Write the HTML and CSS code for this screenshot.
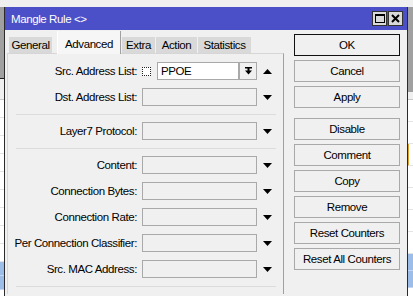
FILE: index.html
```html
<!DOCTYPE html>
<html lang="en">

<head>
    <meta charset="UTF-8">
    <meta name="viewport" content="width=device-width, initial-scale=1.0">
    <title>Mangle Rule</title>
    <link rel="stylesheet" href="styles.css">
</head>

<body>
    <!-- list window behind the dialog -->
    <div class="desk">
        <div class="strip strip-left">
            <div class="s-light"></div>
            <div class="s-gray s-gray-left"></div>
            <div class="s-head"></div>
            <div class="s-row"></div>
            <div class="s-row"></div>
            <div class="s-row"></div>
            <div class="s-row"></div>
            <div class="s-row"></div>
            <div class="s-row"></div>
            <div class="s-row"></div>
            <div class="s-row"></div>
            <div class="s-row"></div>
            <div class="s-sel"></div>
            <div class="s-sel"></div>
            <div class="s-white"></div>
        </div>
        <div class="desk-fill"></div>
        <div class="strip strip-right">
            <div class="s-light"></div>
            <div class="s-gray s-gray-right"></div>
            <div class="s-head s-head-short"></div>
            <div class="s-row s-row-tall"></div>
            <div class="s-row s-row-tall"></div>
            <div class="s-row s-row-tall s-mark"></div>
            <div class="s-row s-row-tall"></div>
            <div class="s-row s-row-tall"></div>
            <div class="s-row s-row-tall"></div>
            <div class="s-row s-row-tall"></div>
            <div class="s-sel s-sel-tall"></div>
            <div class="s-sel s-sel-tall"></div>
            <div class="s-white"></div>
        </div>
    </div>

    <!-- Mangle rule dialog -->
    <div class="window">
        <div class="titlebar">
            <span class="title">Mangle Rule &lt;&gt;</span>
            <span class="ctl">
                <svg width="10" height="9" viewBox="0 0 10 9">
                    <rect x="0.5" y="1" width="9" height="7.5" fill="none" stroke="#000" stroke-width="1" />
                    <rect x="0" y="0" width="10" height="2" fill="#000" />
                </svg>
            </span>
            <span class="ctl">
                <svg width="9" height="9" viewBox="0 0 9 9">
                    <path d="M1 1 L8 8 M8 1 L1 8" stroke="#000" stroke-width="2" />
                </svg>
            </span>
        </div>

        <div class="content">
            <div class="main">
                <div class="tabs">
                    <button class="tab tab-general">General</button>
                    <button class="tab tab-advanced active">Advanced</button>
                    <button class="tab tab-extra">Extra</button>
                    <button class="tab tab-action">Action</button>
                    <button class="tab tab-statistics">Statistics</button>
                </div>

                <div class="panel">
                    <div class="row">
                        <span class="lbl">Src. Address List:</span>
                        <div class="combo">
                            <span class="check"></span>
                            <span class="input">PPOE</span>
                            <span class="drop">
                                <svg width="7" height="8" viewBox="0 0 7 8">
                                    <rect x="0" y="0" width="7" height="1.5" fill="#000" />
                                    <rect x="2.5" y="1" width="2" height="3" fill="#000" />
                                    <polygon points="0,3.5 7,3.5 3.5,7.5" fill="#000" />
                                </svg>
                            </span>
                        </div>
                        <svg class="arrow" width="9" height="5" viewBox="0 0 9 5">
                            <polygon points="0,5 9,5 4.5,0" fill="#000" />
                        </svg>
                    </div>
                    <div class="row">
                        <span class="lbl">Dst. Address List:</span>
                        <span class="field"></span>
                        <svg class="arrow" width="9" height="5" viewBox="0 0 9 5">
                            <polygon points="0,0 9,0 4.5,5" fill="#000" />
                        </svg>
                    </div>

                    <div class="sep"></div>

                    <div class="row">
                        <span class="lbl">Layer7 Protocol:</span>
                        <span class="field"></span>
                        <svg class="arrow" width="9" height="5" viewBox="0 0 9 5">
                            <polygon points="0,0 9,0 4.5,5" fill="#000" />
                        </svg>
                    </div>

                    <div class="sep"></div>

                    <div class="row">
                        <span class="lbl">Content:</span>
                        <span class="field"></span>
                        <svg class="arrow" width="9" height="5" viewBox="0 0 9 5">
                            <polygon points="0,0 9,0 4.5,5" fill="#000" />
                        </svg>
                    </div>
                    <div class="row">
                        <span class="lbl">Connection Bytes:</span>
                        <span class="field"></span>
                        <svg class="arrow" width="9" height="5" viewBox="0 0 9 5">
                            <polygon points="0,0 9,0 4.5,5" fill="#000" />
                        </svg>
                    </div>
                    <div class="row">
                        <span class="lbl">Connection Rate:</span>
                        <span class="field"></span>
                        <svg class="arrow" width="9" height="5" viewBox="0 0 9 5">
                            <polygon points="0,0 9,0 4.5,5" fill="#000" />
                        </svg>
                    </div>
                    <div class="row">
                        <span class="lbl">Per Connection Classifier:</span>
                        <span class="field"></span>
                        <svg class="arrow" width="9" height="5" viewBox="0 0 9 5">
                            <polygon points="0,0 9,0 4.5,5" fill="#000" />
                        </svg>
                    </div>
                    <div class="row">
                        <span class="lbl">Src. MAC Address:</span>
                        <span class="field"></span>
                        <svg class="arrow" width="9" height="5" viewBox="0 0 9 5">
                            <polygon points="0,0 9,0 4.5,5" fill="#000" />
                        </svg>
                    </div>

                    <div class="sep"></div>
                </div>
            </div>

            <!-- command buttons -->
            <div class="buttons">
                <button class="btn btn-default">OK</button>
                <button class="btn">Cancel</button>
                <button class="btn btn-group-end">Apply</button>
                <button class="btn">Disable</button>
                <button class="btn">Comment</button>
                <button class="btn">Copy</button>
                <button class="btn">Remove</button>
                <button class="btn">Reset Counters</button>
                <button class="btn">Reset All Counters</button>
            </div>
        </div>
    </div>
</body>

</html>
```

FILE: styles.css
```css
* {
    box-sizing: border-box;
}

body {
    margin: 0;
    width: 413px;
    height: 296px;
    overflow: hidden;
    position: relative;
    background-color: #f0f0f0;
    font-family: "Liberation Sans", Arial, sans-serif;
    font-size: 11.5px;
    letter-spacing: -0.4px;
    color: #000;
}

/* list window behind the dialog */
.desk {
    display: flex;
    height: 296px;
}

.desk-fill {
    flex: 1;
}

.strip {
    display: flex;
    flex-direction: column;
}

.strip-left {
    width: 4px;
}

.strip-right {
    width: 6px;
}

.s-light {
    height: 7px;
    background-color: #f0f0f0;
}

.s-gray {
    background-color: #a0a0a0;
}

.s-gray-left {
    height: 72px;
    border-bottom: 1px solid #1e1e1e;
}

.s-gray-right {
    height: 85px;
}

.s-head {
    height: 21px;
    background-color: #f0f0f0;
    border-bottom: 1px solid #c8c8c8;
}

.s-head-short {
    height: 8px;
}

.s-row {
    height: 18px;
    background-color: #fff;
    border-bottom: 1px solid #e3e3e3;
}

.s-row-tall {
    height: 22px;
}

.s-mark {
    border-left: 2px solid #e0a030;
}

.s-sel {
    height: 14px;
    background-color: #9dbde9;
    border-bottom: 1px solid #c4d6f1;
}

.s-sel-tall {
    height: 17px;
}

.s-white {
    flex: 1;
    background-color: #fff;
}

/* dialog window */
.window {
    position: absolute;
    left: 4px;
    top: 7px;
    width: 404px;
    height: 289px;
    background-color: #f0f0f0;
    border-left: 1px solid #2a2a2a;
    border-right: 1px solid #2a2a2a;
}

.titlebar {
    display: flex;
    align-items: center;
    height: 23px;
    padding: 0 4px 0 6px;
    background-color: #4b50c8;
    color: #fff;
}

.title {
    flex: 1;
    padding-top: 1px;
}

.ctl {
    display: flex;
    align-items: center;
    justify-content: center;
    width: 15px;
    height: 15px;
    margin-left: 1px;
    background-color: #dadada;
    border: 1px solid #333;
}

.content {
    display: flex;
    padding: 1px 0 0 2px;
}

.main {
    display: flex;
    flex-direction: column;
    width: 277px;
}

/* tabs */
.tabs {
    display: flex;
    align-items: flex-end;
    height: 22px;
    padding-left: 2px;
    position: relative;
    z-index: 1;
}

.tab {
    font: inherit;
    letter-spacing: inherit;
    color: #000;
    height: 16px;
    line-height: 16px;
    padding: 0;
    margin: 0 1px 0 0;
    border: none;
    background-color: #d9d9d9;
    text-align: center;
    white-space: nowrap;
}

.tab-general {
    width: 43px;
    margin-right: 5px;
}

.tab-advanced {
    width: 64px;
}

.tab-extra {
    width: 33px;
}

.tab-action {
    width: 41px;
}

.tab-statistics {
    width: 53px;
}

.tab.active {
    height: 23px;
    margin-bottom: -1px;
    padding-top: 3px;
    line-height: 15px;
    vertical-align: top;
    background-color: #f6f6f6;
    border-left: 1px solid #fff;
    border-right: 1px solid #a0a0a0;
}

.panel {
    flex: 1;
    padding-top: 8px;
    background-color: #f0f0f0;
    border: 1px solid #d6d6d6;
    border-right-color: #a0a0a0;
    border-bottom: none;
}

/* form rows */
.row {
    display: flex;
    align-items: center;
    height: 18px;
    margin-bottom: 8px;
}

.lbl {
    width: 129px;
    margin-right: 5px;
    text-align: right;
    white-space: nowrap;
}

.field {
    width: 115px;
    height: 18px;
    border: 1px solid #a9a9a9;
    background-color: #f0f0f0;
}

.combo {
    display: flex;
    align-items: center;
    width: 115px;
    height: 18px;
}

.check {
    width: 9px;
    height: 9px;
    margin-right: 6px;
    border: 1px dotted #222;
    background-color: #fff;
}

.input {
    width: 82px;
    height: 18px;
    padding-left: 3px;
    line-height: 16px;
    border: 1px solid #a9a9a9;
    background-color: #fff;
}

.drop {
    display: flex;
    align-items: center;
    justify-content: center;
    width: 18px;
    height: 18px;
    border: 1px solid #a9a9a9;
    background-color: #f0f0f0;
}

.arrow {
    margin-left: 6px;
}

.sep {
    height: 1px;
    margin: 2px 7px 7px 8px;
    background-color: #dcdcdc;
}

/* command buttons */
.buttons {
    display: flex;
    flex-direction: column;
    width: 106px;
    margin: 3px 0 0 10px;
}

.btn {
    font: inherit;
    letter-spacing: inherit;
    color: #000;
    height: 22px;
    padding: 0;
    margin-bottom: 4px;
    border: 1px solid #a9a9a9;
    background-color: #f0f0f0;
    white-space: nowrap;
}

.btn-default {
    border-color: #111;
}

.btn-group-end {
    margin-bottom: 10px;
}
```
